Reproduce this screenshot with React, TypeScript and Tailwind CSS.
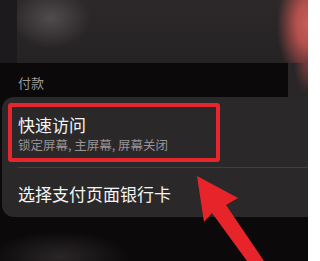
export default function App() {
  return (
    <div className="relative flex h-[261px] w-[308px] flex-col overflow-hidden bg-[#0b090a] font-['Noto_Sans_CJK_SC','Noto_Sans',sans-serif]">
      {/* blurred content above */}
      <div className="flex h-[63px]">
        <div className="w-[17px] bg-[#1c1a1c]" />
        <div className="flex-1 bg-[radial-gradient(ellipse_40px_30px_at_34px_18px,#504c4e,transparent),radial-gradient(ellipse_30px_58px_at_290px_24px,#c65c56_0%,#b5514d_35%,transparent_100%),linear-gradient(#2c282a,#262325)]" />
      </div>

      {/* section header */}
      <div className="flex h-[34px]">
        <div className="flex-1 pl-[18px] pt-[12px] text-[13px] leading-[16px] text-[#9a9899]">
          付款
        </div>
        <div className="w-[20px] bg-[radial-gradient(ellipse_14px_30px_at_20px_0px,#7a3d3b,transparent),linear-gradient(#2a2628,#2a2628)]" />
      </div>

      {/* settings card */}
      <div className="ml-[2px] h-[120px] rounded-l-[12px] bg-[#2b2829] pt-[6px]">
        <div className="ml-[6px] h-[59px] w-[212px] rounded-[3px] border-[4px] border-[#e6252c] pl-[6px] pt-[8px]">
          <div className="text-[17px] leading-[20px] text-[#f4f4f4]">快速访问</div>
          <div className="mt-[2px] text-[12.5px] leading-[16px] text-[#979496]">
            锁定屏幕, 主屏幕, 屏幕关闭
          </div>
        </div>
        <div className="ml-[16px] mt-[5px] h-px bg-[#433f41]" />
        <div className="pl-[16px] pt-[16px] text-[17px] leading-[20px] text-[#f4f4f4]">
          选择支付页面银行卡
        </div>
      </div>

      {/* blurred content below */}
      <div className="flex-1 bg-[radial-gradient(ellipse_70px_26px_at_60px_40px,#2a2628,transparent)]" />

      {/* pointer arrow */}
      <svg
        className="absolute left-0 top-0"
        width="308"
        height="261"
        viewBox="0 0 308 261"
      >
        <polygon
          points="197,176 238,198 226,205 264,261 247,261 212,213 204,222"
          fill="#e8242b"
        />
      </svg>
    </div>
  );
}
